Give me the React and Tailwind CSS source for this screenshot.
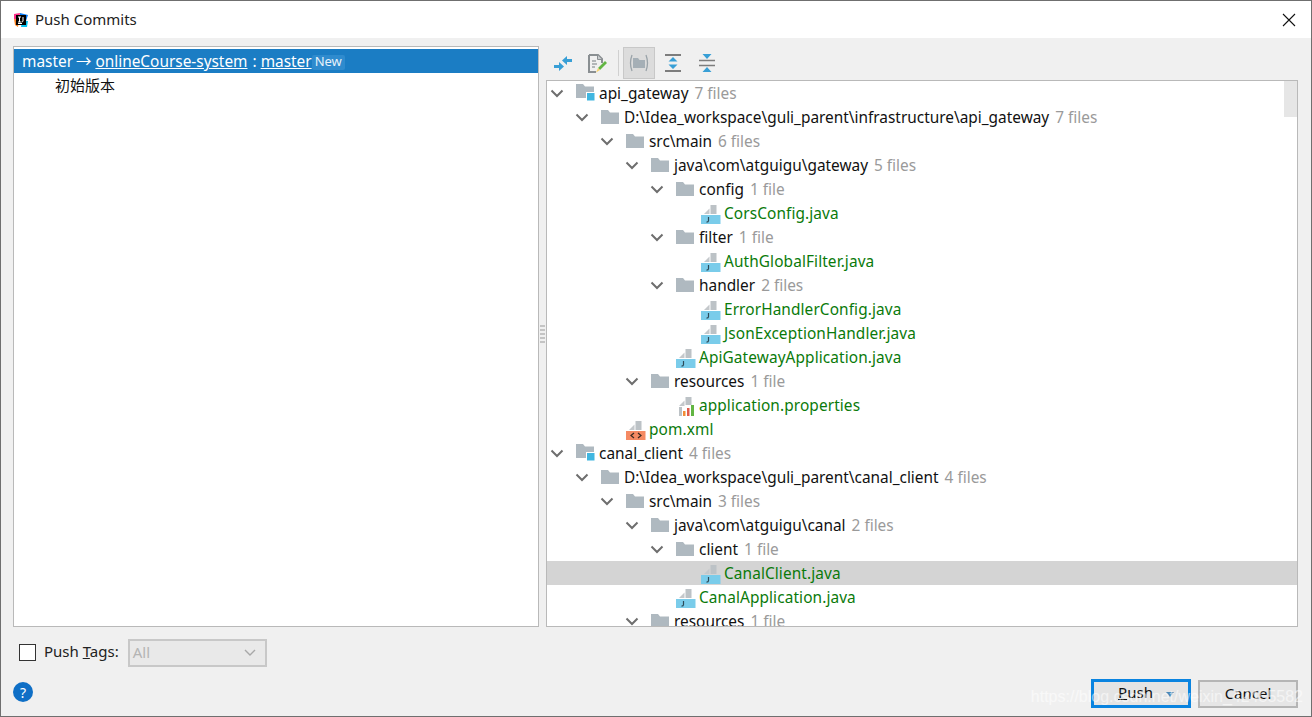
import React from "react";

const FolderIcon = () => (
  <svg width="18" height="14" viewBox="0 0 18 14">
    <path d="M0 0h7l2 2.500h9V14H0z" fill="#afb9c0" />
  </svg>
);

const ModuleIcon = () => (
  <svg width="20" height="18" viewBox="0 0 20 18">
    <path d="M0 0h7l2 2.500h9V14H0z" fill="#afb9c0" />
    <rect x="10.500" y="8.500" width="8.500" height="8.500" fill="#40b6e0" stroke="#fff" />
  </svg>
);

const JavaIcon = () => (
  <svg className="mt-[2px]" width="20" height="19" viewBox="0 0 20 19">
    <path d="M3 9L8.500 3.500V9z" fill="#c4c8cb" />
    <rect x="9.500" y="0" width="6" height="9" fill="#bcc2c6" />
    <rect x="0" y="10" width="19.500" height="9" fill="#7accea" />
    <path d="M7.500 12v3.800q0 1.400-2 1.400" fill="none" stroke="#2d4a58" strokeWidth="1.200" />
  </svg>
);

const PropsIcon = () => (
  <svg className="mt-[2px]" width="20" height="19" viewBox="0 0 20 19">
    <path d="M3 9L8.500 3.500V9z" fill="#c4c8cb" />
    <rect x="9.500" y="0" width="6" height="8" fill="#bcc2c6" />
    <rect x="3" y="10" width="3" height="9" fill="#bcc2c6" />
    <rect x="7" y="14" width="2.500" height="5" fill="#f28c35" />
    <rect x="11" y="11" width="2.500" height="8" fill="#e05a4a" />
    <rect x="15" y="8" width="3" height="11" fill="#62b543" />
  </svg>
);

const XmlIcon = () => (
  <svg className="mt-[2px]" width="20" height="19" viewBox="0 0 20 19">
    <path d="M3 9L8.500 3.500V9z" fill="#c4c8cb" />
    <rect x="9.500" y="0" width="6" height="9" fill="#bcc2c6" />
    <rect x="0" y="10" width="19.500" height="9" fill="#f58a63" />
    <path d="M8 12l-3 2.500L8 17M12 12l3 2.500-3 2.500" fill="none" stroke="#3a2a22" strokeWidth="1.200" />
  </svg>
);

const Chevron = () => (
  <svg width="14" height="9" viewBox="0 0 14 9">
    <path d="M1.500 1.500L7 7l5.500-5.500" fill="none" stroke="#6e6e6e" strokeWidth="2" />
  </svg>
);

const icons = {
  module: <ModuleIcon />,
  folder: <FolderIcon />,
  java: <JavaIcon />,
  props: <PropsIcon />,
  xml: <XmlIcon />,
};

const rows = [
  { d: 0, icon: "module", name: "api_gateway", count: "7 files" },
  { d: 1, icon: "folder", name: "D:\\Idea_workspace\\guli_parent\\infrastructure\\api_gateway", count: "7 files" },
  { d: 2, icon: "folder", name: "src\\main", count: "6 files" },
  { d: 3, icon: "folder", name: "java\\com\\atguigu\\gateway", count: "5 files" },
  { d: 4, icon: "folder", name: "config", count: "1 file" },
  { d: 5, icon: "java", name: "CorsConfig.java" },
  { d: 4, icon: "folder", name: "filter", count: "1 file" },
  { d: 5, icon: "java", name: "AuthGlobalFilter.java" },
  { d: 4, icon: "folder", name: "handler", count: "2 files" },
  { d: 5, icon: "java", name: "ErrorHandlerConfig.java" },
  { d: 5, icon: "java", name: "JsonExceptionHandler.java" },
  { d: 4, icon: "java", name: "ApiGatewayApplication.java" },
  { d: 3, icon: "folder", name: "resources", count: "1 file" },
  { d: 4, icon: "props", name: "application.properties" },
  { d: 2, icon: "xml", name: "pom.xml" },
  { d: 0, icon: "module", name: "canal_client", count: "4 files" },
  { d: 1, icon: "folder", name: "D:\\Idea_workspace\\guli_parent\\canal_client", count: "4 files" },
  { d: 2, icon: "folder", name: "src\\main", count: "3 files" },
  { d: 3, icon: "folder", name: "java\\com\\atguigu\\canal", count: "2 files" },
  { d: 4, icon: "folder", name: "client", count: "1 file" },
  { d: 5, icon: "java", name: "CanalClient.java", selected: true },
  { d: 4, icon: "java", name: "CanalApplication.java" },
  { d: 3, icon: "folder", name: "resources", count: "1 file" },
];

const TreeRow = ({ row }) => {
  const isDir = Boolean(row.count);
  return (
    <div
      className={`flex items-center h-6 shrink-0 text-[15.4px] ${row.selected ? "bg-[#d4d4d4]" : ""}`}
      style={{ paddingLeft: row.d * 25 }}
    >
      <span className="w-[29px] pl-[3px] flex items-center justify-start shrink-0">
        {isDir && <Chevron />}
      </span>
      <span className="w-[23px] flex items-center shrink-0">{icons[row.icon]}</span>
      <span className={isDir ? "pt-[2px] text-[#111111] whitespace-nowrap" : "pt-[2px] text-[#0a7a0a] tracking-[0.1px] whitespace-nowrap"}>
        {row.name}
      </span>
      {row.count && <span className="ml-[6px] pt-[2px] text-[#9a9a9a] whitespace-nowrap">{row.count}</span>}
    </div>
  );
};

const Toolbar = () => (
  <div className="h-[34px] flex items-center pl-[6px] shrink-0">
    <div className="w-[22px] flex justify-center">
      <svg width="18" height="15" viewBox="0 0 18 15">
        <path d="M8 4.500L13 0v3h5v3h-5v3z" fill="#389fd6" />
        <path d="M10 10.500L5 6v3H0v3h5v3z" fill="#389fd6" />
      </svg>
    </div>
    <div className="w-[22px] ml-[12px] flex justify-center">
      <svg width="19" height="19" viewBox="0 0 19 19">
        <path d="M1 1h9l4 4v4M1 1v17h7" fill="none" stroke="#8a8f92" strokeWidth="2" />
        <path d="M9.500 1v4.500H14" fill="#c9cdcf" stroke="#8a8f92" strokeWidth="1" />
        <path d="M4 7h4M4 10h5M4 13h3" stroke="#9da2a5" strokeWidth="1.500" />
        <path d="M10 14l7-7 2 2-7 7z" fill="#62b543" />
        <path d="M8 18.500l2-4.500 2 2z" fill="#f4d06f" />
      </svg>
    </div>
    <div className="w-px h-[26px] bg-[#d0d0d0] ml-[10px]" />
    <div className="w-8 h-8 ml-[4px] bg-[#dcdcdc] border border-[#c8c8c8] flex items-center justify-center">
      <svg width="20" height="20" viewBox="0 0 20 20">
        <path d="M3 2Q0 10 3 18M17 2q3 8 0 16" fill="none" stroke="#9aa3a9" strokeWidth="1.300" />
        <path d="M4 5h5l1.500 2H16v8H4z" fill="#a5afb6" />
      </svg>
    </div>
    <div className="w-[20px] ml-[8px] flex justify-center">
      <svg width="16" height="18" viewBox="0 0 16 18">
        <path d="M0 1h16M0 17h16" stroke="#7d7d7d" strokeWidth="2" />
        <path d="M8 3l4.500 4.500h-9zM8 15l-4.500-4.500h9z" fill="#389fd6" />
      </svg>
    </div>
    <div className="w-[20px] ml-[14px] flex justify-center">
      <svg width="16" height="20" viewBox="0 0 16 20">
        <path d="M0 7.500h16M0 12.500h16" stroke="#7d7d7d" strokeWidth="1.600" />
        <path d="M8 6L3.500 1h9zM8 14l4.500 5h-9z" fill="#389fd6" />
      </svg>
    </div>
  </div>
);

export default function App() {
  return (
    <div className="relative w-[1312px] h-[717px] flex flex-col bg-[#f0f0f0] border border-[#6f6f6f] overflow-hidden text-[15px] text-[#111111] font-['Noto_Sans','Noto_Sans_CJK_SC',sans-serif]">
      {/* Title bar */}
      <div className="h-[37px] bg-white flex items-center pl-[12px] pr-[15px] shrink-0">
        <svg width="16" height="16" viewBox="0 0 16 16">
          <path d="M1 2l6-1-1 7-5-1z" fill="#ff318c" />
          <path d="M1 7l5 1-1 7-3-2z" fill="#fc801d" />
          <path d="M7 1l8 2-2 6-6-2z" fill="#087cfa" />
          <path d="M9 9l6 0-1 6-6 0z" fill="#07c3f2" />
          <rect x="3" y="3" width="10" height="10" fill="#000" />
          <path d="M5 5h3M6.500 5v5M5 10h3M10 5v4q0 1-1.500 1M5 11.500h4" stroke="#fff" strokeWidth="1" fill="none" />
        </svg>
        <span className="ml-[6px] text-[15px] text-[#222222]">Push Commits</span>
        <svg className="ml-auto" width="14" height="14" viewBox="0 0 14 14">
          <path d="M1 1l12 12M13 1L1 13" stroke="#111111" strokeWidth="1.100" />
        </svg>
      </div>

      {/* Panels */}
      <div className="h-[589px] flex pt-2 pl-3 pr-[13px] shrink-0">
        <div className="w-[526px] bg-white border border-[#b9b9b9] pt-[2px] shrink-0">
          <div className="h-6 bg-[#1b7dc4] flex items-center pl-2 pt-[2px] text-white text-[15.4px] whitespace-nowrap">
            <span>master</span>
            <span className="ml-[3px]">→</span>
            <span className="ml-[4px] underline">onlineCourse-system</span>
            <span className="ml-[5px]">:</span>
            <span className="ml-[4px] underline">master</span>
            <span className="px-[3px] h-[15px] flex items-center rounded-[2px] bg-[#2f8bce] text-[13px] text-[#e8f2fa]">New</span>
          </div>
          <div className="h-6 flex items-center pl-[41px]">初始版本</div>
        </div>
        <div className="relative w-[7px] shrink-0">
          <div className="absolute left-[1px] top-[279px] w-[5px] h-5 bg-[repeating-linear-gradient(to_bottom,#c4c4c4_0,#c4c4c4_2px,transparent_2px,transparent_4px)]" />
        </div>
        <div className="flex-1 flex flex-col min-w-0">
          <Toolbar />
          <div className="relative flex-1 bg-white border border-[#b9b9b9] overflow-hidden flex flex-col">
            {rows.map((row, i) => (
              <TreeRow key={i} row={row} />
            ))}
            <div className="absolute right-0 top-0 w-[13px] h-9 bg-[#e6e6e6]" />
          </div>
        </div>
      </div>

      {/* Push tags */}
      <div className="h-[40px] flex items-center pl-[18px] pt-[11px] shrink-0">
        <span className="w-[17px] h-[17px] bg-white border border-[#333333]" />
        <span className="ml-2 pb-[2px] text-[#222222]">
          Push <span className="underline">T</span>ags:
        </span>
        <div className="ml-[9px] w-[139px] h-7 bg-[#e9e9e9] border-2 border-[#c8c8c8] flex items-center justify-between pl-[3px] pr-[9px] text-[#b4b4b4]">
          <span>All</span>
          <svg width="12" height="8" viewBox="0 0 12 8">
            <path d="M1 1l5 5 5-5" fill="none" stroke="#a8a8a8" strokeWidth="1.400" />
          </svg>
        </div>
      </div>

      {/* Bottom row */}
      <div className="flex-1 flex items-start pl-3 pr-[13px] pt-3">
        <span className="mt-[3px] w-5 h-5 rounded-full bg-[#0f6fc6] text-white text-[14px] flex items-center justify-center">?</span>
        <div className="ml-auto flex gap-[7px]">
          <div className="relative w-[100px] h-[29px] bg-[#e4e4e4] border-[3px] border-[#0a84e0] flex items-center justify-center pr-[11px] pb-[2px]">
            <span><span className="underline">P</span>ush</span>
            <svg className="absolute right-[14px] top-[10px]" width="8" height="5" viewBox="0 0 8 5">
              <path d="M0 0h8L4 5z" fill="#4a88b8" />
            </svg>
          </div>
          <div className="w-[100px] h-[28px] mt-px bg-[#e6e6e6] border-2 border-[#b5b5b5] flex items-center justify-center pb-[2px]">
            Cancel
          </div>
        </div>
      </div>

      {/* csdn watermark */}
      <div className="absolute right-[8px] bottom-[7px] text-[16px] text-white/55 font-['Liberation_Sans',sans-serif] whitespace-nowrap">
        https://blog.csdn.net/weixin_42455582
      </div>
    </div>
  );
}
